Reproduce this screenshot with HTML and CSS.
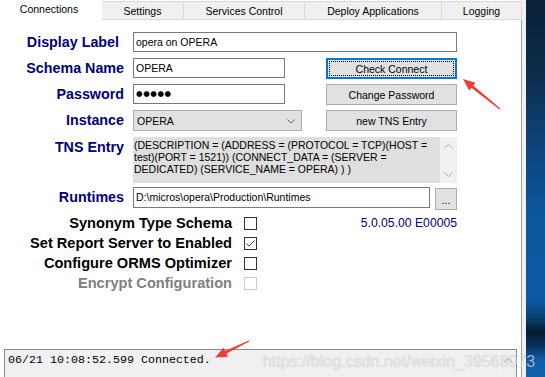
FILE: index.html
```html
<!DOCTYPE html>
<html lang="en">
  <head>
    <meta charset="UTF-8" />
    <meta name="viewport" content="width=device-width, initial-scale=1.0" />
    <title>OPERA Connections</title>
    <link rel="stylesheet" href="styles.css">
  </head>
  <body>
    <div class="screen">
      <div class="window">
        <!-- Tab strip -->
        <nav class="tabs">
          <span class="tab active tab-connections">Connections</span>
          <span class="tab tab-settings">Settings</span>
          <span class="tab tab-services">Services Control</span>
          <span class="tab tab-deploy">Deploy Applications</span>
          <span class="tab tab-logging">Logging</span>
        </nav>

        <!-- Connections panel -->
        <section class="panel">
          <div class="form">
            <div class="row row-display">
              <span class="label label-display">Display Label</span>
              <div class="field field-wide">opera on OPERA</div>
            </div>

            <div class="row row-button">
              <span class="label">Schema Name</span>
              <div class="field field-short">OPERA</div>
              <span class="button button-focus">Check Connect</span>
            </div>

            <div class="row row-button">
              <span class="label">Password</span>
              <div class="field field-short field-password">●●●●●</div>
              <span class="button">Change Password</span>
            </div>

            <div class="row row-button row-instance">
              <span class="label">Instance</span>
              <div class="select">
                <span>OPERA</span>
                <svg class="chevron" width="8" height="5" viewBox="0 0 8 5">
                  <polyline points="0.5,0.5 4,4 7.5,0.5" fill="none" stroke="#6a6a6a" stroke-width="1" />
                </svg>
              </div>
              <span class="button button-tns">new TNS Entry</span>
            </div>

            <div class="row row-tns">
              <span class="label">TNS Entry</span>
              <div class="tns-box">
                <div class="tns-text">
                  <div>(DESCRIPTION = (ADDRESS = (PROTOCOL = TCP)(HOST =</div>
                  <div>test)(PORT = 1521)) (CONNECT_DATA = (SERVER =</div>
                  <div>DEDICATED) (SERVICE_NAME = OPERA) ) )</div>
                </div>
                <div class="tns-scroll">
                  <svg width="9" height="5" viewBox="0 0 9 5">
                    <polyline points="0.5,4.5 4.5,0.5 8.5,4.5" fill="none" stroke="#b4b4b4" stroke-width="1" />
                  </svg>
                  <svg width="9" height="5" viewBox="0 0 9 5">
                    <polyline points="0.5,0.5 4.5,4.5 8.5,0.5" fill="none" stroke="#b4b4b4" stroke-width="1" />
                  </svg>
                </div>
              </div>
            </div>

            <div class="row row-runtimes">
              <span class="label">Runtimes</span>
              <div class="field field-path">D:\micros\opera\Production\Runtimes</div>
              <span class="button button-browse">...</span>
            </div>

            <!-- Options and version -->
            <div class="options">
              <div class="checks">
                <div class="check-row">
                  <span class="check-label">Synonym Type Schema</span>
                  <span class="checkbox"></span>
                </div>
                <div class="check-row">
                  <span class="check-label">Set Report Server to Enabled</span>
                  <span class="checkbox">
                    <svg width="11" height="11" viewBox="0 0 11 11">
                      <polyline points="1.5,5.5 4,8 9.5,2.5" fill="none" stroke="#444" stroke-width="1" />
                    </svg>
                  </span>
                </div>
                <div class="check-row">
                  <span class="check-label">Configure ORMS Optimizer</span>
                  <span class="checkbox"></span>
                </div>
                <div class="check-row disabled">
                  <span class="check-label">Encrypt Configuration</span>
                  <span class="checkbox"></span>
                </div>
              </div>
              <span class="version">5.0.05.00 E00005</span>
            </div>
          </div>

          <!-- Status log -->
          <div class="log">
            <div class="log-text">06/21 10:08:52.599 Connected.</div>
            <div class="log-scroll">
              <svg width="9" height="5" viewBox="0 0 9 5">
                <polyline points="0.5,4.5 4.5,0.5 8.5,4.5" fill="none" stroke="#a0a0a0" stroke-width="1" />
              </svg>
            </div>
          </div>
        </section>
      </div>

      <div class="desktop"></div>

      <!-- Annotations drawn over the screenshot -->
      <span class="watermark">https://blog.csdn.net/weixin_39568073</span>
      <svg class="arrows" width="545" height="377" viewBox="0 0 545 377">
        <polygon fill="#f03a36" points="500.4,108.5 473.2,85.4 475.5,82.7 463,79 469.2,90.5 471.4,87.8 499.6,109.5" />
        <polygon fill="#f03a36" points="248.7,340.5 225.1,350.9 223.6,347.8 215,357.5 228,356.8 226.5,353.6 249.3,341.5" />
      </svg>
    </div>
  </body>
</html>
```

FILE: styles.css
```css
* {
  box-sizing: border-box;
}

body {
  margin: 0;
  font-family: "Liberation Sans", Arial, sans-serif;
  font-size: 10.5px;
  color: #000;
}

.screen {
  position: relative;
  display: flex;
  width: 545px;
  height: 377px;
  overflow: hidden;
}

.window {
  width: 526px;
  display: flex;
  flex-direction: column;
  background-color: #f0f0f0;
}

.desktop {
  flex: 1;
  background: linear-gradient(
    to bottom,
    #0b2238 0,
    #0c2a48 70px,
    #0d3c6c 120px,
    #0d559b 210px,
    #0c5aa2 300px,
    #08406f 318px,
    #041a30 332px,
    #06325e 346px,
    #0f5ca5 360px,
    #1462aa 377px
  );
}

/* Tabs */
.tabs {
  display: flex;
  height: 20px;
  width: 522px;
  background-color: #fff;
}

.tab {
  display: flex;
  justify-content: center;
  align-items: center;
  height: 19px;
  margin-top: 1px;
  padding-top: 1px;
  background-color: #f0f0f0;
  border: 1px solid #d9d9d9;
  border-left: 0;
}

.tab.active {
  height: 20px;
  margin-top: 0;
  padding: 0 4px 2px 0;
  background-color: #fff;
  border: 0;
}

.tab-connections {
  width: 102px;
}

.tab-settings {
  width: 82px;
}

.tab-services {
  width: 121px;
}

.tab-deploy {
  width: 137px;
}

.tab-logging {
  width: 80px;
}

/* Panel */
.panel {
  flex: 1;
  width: 522px;
  display: flex;
  flex-direction: column;
  padding-top: 12px;
  background-color: #fff;
  border-right: 1px solid #a0a0a0;
  overflow: hidden;
}

.form {
  width: 457px;
}

.row {
  display: flex;
  align-items: flex-start;
  height: 21px;
  margin-bottom: 5px;
}

.row-display {
  height: 20px;
  margin-bottom: 6px;
}

.row-instance {
  margin-bottom: 6px;
}

.label {
  width: 124px;
  margin-right: 9px;
  flex-shrink: 0;
  text-align: right;
  font-size: 14.3px;
  font-weight: 700;
  line-height: 21px;
  color: #000080;
}

.label-display {
  padding-right: 5px;
  line-height: 20px;
}

.field {
  height: 20px;
  padding: 0 2px;
  line-height: 18px;
  border: 1px solid #7a7a7a;
  background-color: #fff;
  white-space: nowrap;
}

.field-wide {
  width: 324px;
}

.field-short {
  width: 152px;
}

.field-password {
  font-family: "DejaVu Sans", sans-serif;
  font-size: 7.5px;
  letter-spacing: 0.6px;
}

.select {
  display: flex;
  justify-content: space-between;
  align-items: center;
  width: 169px;
  height: 21px;
  padding: 0 6px 0 3px;
  background-color: #e1e1e1;
  border: 1px solid #adadad;
}

.chevron {
  margin-top: 1px;
}

.button {
  display: flex;
  justify-content: center;
  align-items: center;
  width: 131px;
  height: 21px;
  margin-left: 41px;
  background-color: #e1e1e1;
  border: 1px solid #adadad;
}

.button-focus {
  border: 2px solid #0078d7;
  outline: 1px dotted #000;
  outline-offset: -4px;
}

.button-tns {
  margin-left: 24px;
}

/* TNS entry */
.row-tns {
  height: 46px;
  margin-bottom: 4px;
}

.row-tns .label {
  line-height: 20px;
}

.tns-box {
  display: flex;
  width: 324px;
  height: 46px;
  background-color: #dfdfdf;
}

.tns-text {
  flex: 1;
  padding: 2px 1px;
  line-height: 12px;
  white-space: nowrap;
}

.tns-scroll {
  display: flex;
  flex-direction: column;
  justify-content: space-between;
  align-items: center;
  width: 17px;
  padding: 7px 0 6px;
  background-color: #f0f0f0;
}

/* Runtimes */
.row-runtimes {
  height: 22px;
  margin-bottom: 4px;
}

.field-path {
  width: 297px;
  height: 21px;
  line-height: 19px;
}

.button-browse {
  width: 22px;
  height: 22px;
  margin: 1px 0 0 5px;
  align-items: flex-end;
  padding-bottom: 3px;
}

/* Options */
.options {
  display: flex;
}

.checks {
  display: flex;
  flex-direction: column;
}

.check-row {
  display: flex;
  align-items: center;
  height: 20px;
}

.check-label {
  width: 232px;
  margin-right: 12px;
  text-align: right;
  font-size: 14.6px;
  font-weight: 700;
  white-space: nowrap;
}

.checkbox {
  display: inline-flex;
  justify-content: center;
  align-items: center;
  width: 13px;
  height: 13px;
  border: 1px solid #333;
  background-color: #fff;
}

.check-row.disabled .check-label {
  color: #808080;
}

.check-row.disabled .checkbox {
  border-color: #cccccc;
}

.version {
  margin-left: auto;
  font-size: 12.2px;
  line-height: 21px;
  color: #000080;
}

/* Status log */
.log {
  display: flex;
  width: 513px;
  height: 40px;
  margin: 56px 0 0 4px;
  flex-shrink: 0;
  background-color: #f0f0f0;
  border: 1px solid #8c8c8c;
}

.log-text {
  flex: 1;
  padding: 4px 3px;
  font-family: "Liberation Mono", "Courier New", monospace;
  font-size: 11.67px;
  line-height: 13px;
}

.log-scroll {
  display: flex;
  justify-content: center;
  width: 17px;
  padding-top: 8px;
  border-left: 1px solid #fafafa;
}

/* Overlays */
.watermark {
  position: absolute;
  left: 263px;
  top: 353px;
  font-family: "Liberation Sans", Arial, sans-serif;
  font-size: 16px;
  line-height: 18px;
  color: rgba(255, 255, 255, 0.6);
  text-shadow: 0 0 1px rgba(0, 0, 0, 0.25);
  white-space: nowrap;
}

.arrows {
  position: absolute;
  left: 0;
  top: 0;
  pointer-events: none;
}
```
